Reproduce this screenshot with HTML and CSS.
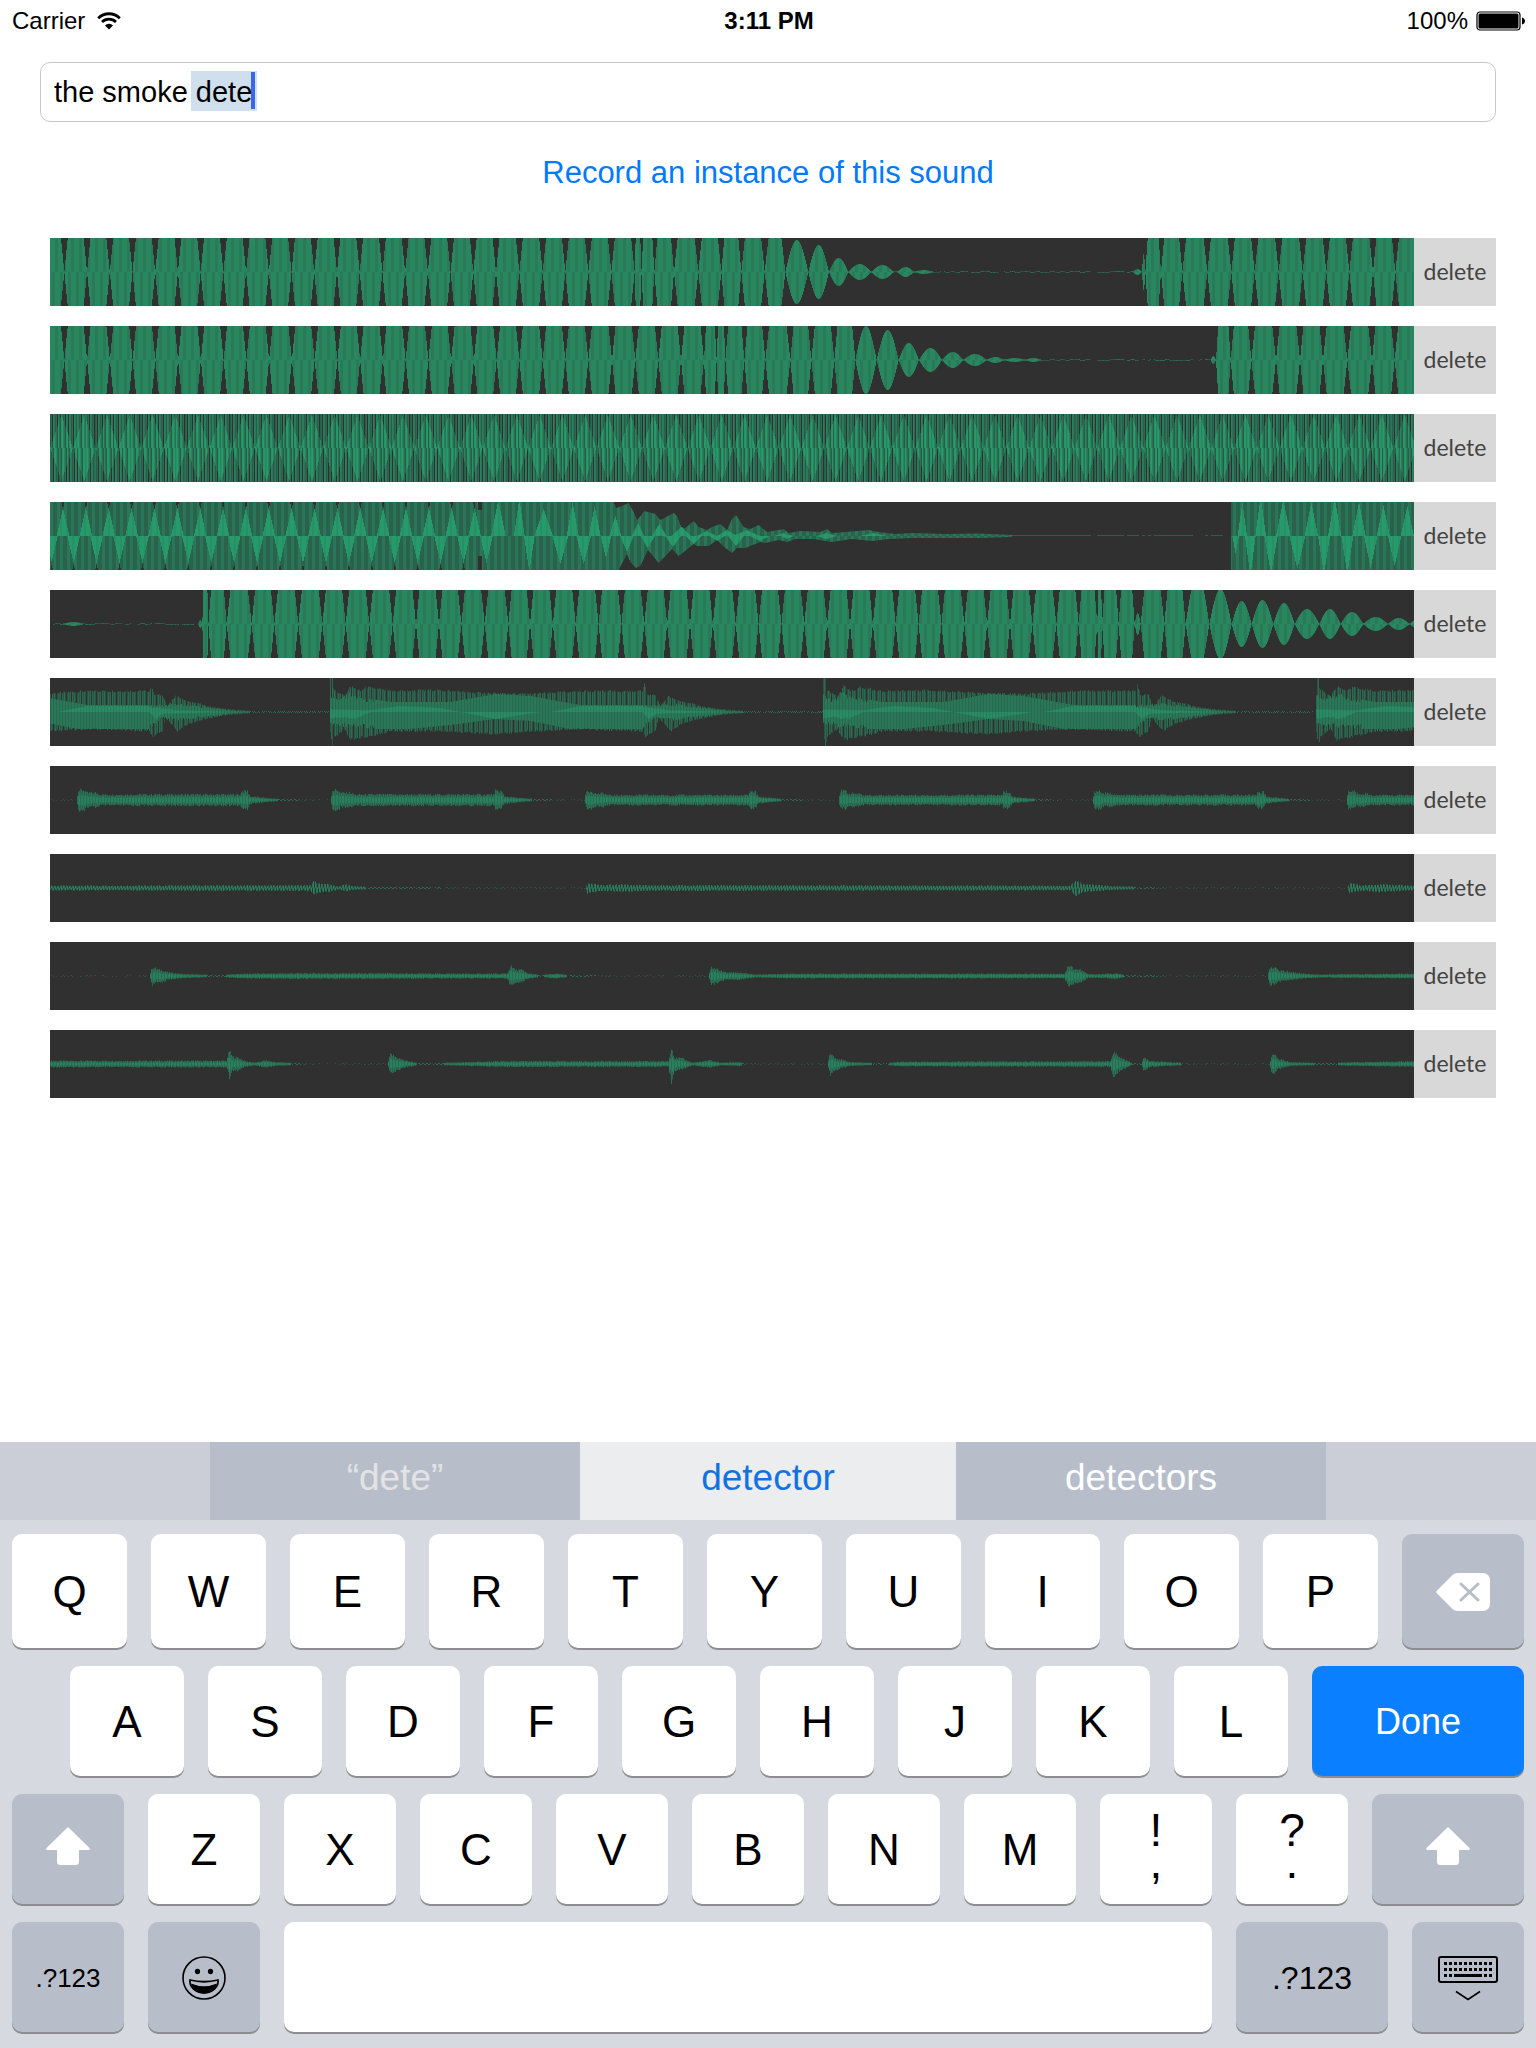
FILE: index.html
```html
<!DOCTYPE html>
<html lang="en">
<head>
<meta charset="utf-8">
<meta name="viewport" content="width=device-width, initial-scale=1">
<title>Sound recorder</title>
<link rel="stylesheet" href="styles.css">
</head>
<body>
<div class="screen">
  <header class="status">
    <div class="status-left">
      <span>Carrier</span>
      <svg class="wifi" width="24" height="18" viewBox="0 0 24 18" aria-hidden="true">
        <path d="M1.2 6.2a15.3 15.3 0 0 1 21.6 0" fill="none" stroke="#000" stroke-width="2.8"/>
        <path d="M5 10a9.9 9.9 0 0 1 14 0" fill="none" stroke="#000" stroke-width="2.6"/>
        <path d="M12 17.6l-4-4.1a5.7 5.7 0 0 1 8 0z"/>
      </svg>
    </div>
    <time class="clock">3:11 PM</time>
    <div class="status-right">
      <span>100%</span>
      <svg class="battery" width="50" height="20" viewBox="0 0 50 20" aria-hidden="true">
        <rect x="1" y="1" width="43" height="18" rx="3" fill="none" stroke="#000" stroke-width="1.2"/>
        <rect x="2.500" y="2.500" width="40" height="15" rx="1.500"/>
        <path d="M46 6.5c4 1 4 6 0 7z"/>
      </svg>
    </div>
  </header>

  <main class="content">
    <div class="field">
      <input class="field-input" type="text" aria-label="Sound name" value="the smoke dete">
      <span class="marked"></span>
      <span class="caret"></span>
    </div>
    <button class="record" type="button">Record an instance of this sound</button>
    <ul class="clips">
      <li class="clip"><canvas class="wave" width="1364" height="68"></canvas><button class="delete" type="button">delete</button></li>
      <li class="clip"><canvas class="wave" width="1364" height="68"></canvas><button class="delete" type="button">delete</button></li>
      <li class="clip"><canvas class="wave" width="1364" height="68"></canvas><button class="delete" type="button">delete</button></li>
      <li class="clip"><canvas class="wave" width="1364" height="68"></canvas><button class="delete" type="button">delete</button></li>
      <li class="clip"><canvas class="wave" width="1364" height="68"></canvas><button class="delete" type="button">delete</button></li>
      <li class="clip"><canvas class="wave" width="1364" height="68"></canvas><button class="delete" type="button">delete</button></li>
      <li class="clip"><canvas class="wave" width="1364" height="68"></canvas><button class="delete" type="button">delete</button></li>
      <li class="clip"><canvas class="wave" width="1364" height="68"></canvas><button class="delete" type="button">delete</button></li>
      <li class="clip"><canvas class="wave" width="1364" height="68"></canvas><button class="delete" type="button">delete</button></li>
      <li class="clip"><canvas class="wave" width="1364" height="68"></canvas><button class="delete" type="button">delete</button></li>
    </ul>
  </main>

  <section class="keyboard" aria-label="Keyboard">
    <div class="suggestions">
      <button class="suggestion typed" type="button">“dete”</button>
      <button class="suggestion chosen" type="button">detector</button>
      <button class="suggestion" type="button">detectors</button>
    </div>
    <div class="keys">
      <div class="row row-1">
        <button class="key" type="button">Q</button><button class="key" type="button">W</button><button class="key" type="button">E</button><button class="key" type="button">R</button><button class="key" type="button">T</button><button class="key" type="button">Y</button><button class="key" type="button">U</button><button class="key" type="button">I</button><button class="key" type="button">O</button><button class="key" type="button">P</button>
        <button class="key dark" type="button" aria-label="Backspace">
          <svg width="54" height="38" viewBox="0 0 54 38" aria-hidden="true">
            <path d="M1 17.5L16.500 2Q18.500 0 21.500 0H46Q54 0 54 8V30Q54 38 46 38H21.500Q18.500 38 16.500 36L1 20.500Q-.5 19 1 17.500z" fill="#fff"/>
            <path d="M25 11l17 16M42 11L25 27" stroke="#b7bec9" stroke-width="3" stroke-linecap="round"/>
          </svg>
        </button>
      </div>
      <div class="row row-2">
        <button class="key" type="button">A</button><button class="key" type="button">S</button><button class="key" type="button">D</button><button class="key" type="button">F</button><button class="key" type="button">G</button><button class="key" type="button">H</button><button class="key" type="button">J</button><button class="key" type="button">K</button><button class="key" type="button">L</button>
        <button class="key done" type="button">Done</button>
      </div>
      <div class="row row-3">
        <button class="key dark" type="button" aria-label="Shift">
          <svg class="arrow" width="44" height="38" viewBox="0 0 44 38" aria-hidden="true"><path d="M22 0L43.500 21Q45 23 42 23H33V34.500Q33 38 29.500 38H14.500Q11 38 11 34.500V23H2Q-1 23 .5 21z" fill="#fff"/></svg>
        </button>
        <button class="key" type="button">Z</button><button class="key" type="button">X</button><button class="key" type="button">C</button><button class="key" type="button">V</button><button class="key" type="button">B</button><button class="key" type="button">N</button><button class="key" type="button">M</button>
        <button class="key double" type="button"><span>!</span><span>,</span></button>
        <button class="key double" type="button"><span>?</span><span>.</span></button>
        <button class="key dark" type="button" aria-label="Shift">
          <svg class="arrow" width="44" height="38" viewBox="0 0 44 38" aria-hidden="true"><path d="M22 0L43.500 21Q45 23 42 23H33V34.500Q33 38 29.500 38H14.500Q11 38 11 34.500V23H2Q-1 23 .5 21z" fill="#fff"/></svg>
        </button>
      </div>
      <div class="row row-4">
        <button class="key dark small" type="button">.?123</button>
        <button class="key dark" type="button" aria-label="Emoji">
          <svg width="44" height="44" viewBox="0 0 44 44" aria-hidden="true">
            <circle cx="22" cy="22" r="21" fill="none" stroke="#000" stroke-width="1.600"/>
            <ellipse cx="15.500" cy="15.500" rx="2.600" ry="2.800"/><ellipse cx="28.500" cy="15.500" rx="2.600" ry="2.800"/>
            <path d="M8 24Q22 27.500 36 24C37 31 30 37 22 37S7 31 8 24z" fill="none" stroke="#000" stroke-width="1.800" stroke-linejoin="round"/>
            <path d="M9 27.500Q22 33 35 27.500C34 33 29 37 22 37S10 33 9 27.500z"/>
          </svg>
        </button>
        <button class="key" type="button" aria-label="Space"></button>
        <button class="key dark medium" type="button">.?123</button>
        <button class="key dark" type="button" aria-label="Hide keyboard">
          <svg width="60" height="46" viewBox="0 0 60 46" aria-hidden="true">
            <rect x="1" y="2" width="58" height="25" rx="2" fill="none" stroke="#000" stroke-width="2"/>
            <path d="M6 8.500H54M6 14.500H54" stroke="#000" stroke-width="3" stroke-dasharray="3 2"/>
            <path d="M6 20.500H14M46 20.500H54" stroke="#000" stroke-width="3" stroke-dasharray="3 2"/>
            <path d="M16 20.500H44" stroke="#000" stroke-width="3"/>
            <path d="M18 36.500L30 44.500L42 36.500" fill="none" stroke="#000" stroke-width="1.600"/>
          </svg>
        </button>
      </div>
    </div>
  </section>
</div>
<script src="waveforms.js"></script>
</body>
</html>
```
FILE: styles.css
```css
* {
  box-sizing: border-box;
}

body {
  margin: 0;
  background: #fff;
  color: #000;
  font-family: "Liberation Sans", Arial, sans-serif;
}

button {
  margin: 0;
  padding: 0;
  border: 0;
  font: inherit;
  color: inherit;
  background: none;
}

.screen {
  display: flex;
  flex-direction: column;
  min-height: 100vh;
}

.status {
  display: grid;
  grid-template-columns: 1fr auto 1fr;
  align-items: center;
  height: 42px;
  padding: 0 10px 0 12px;
  font-size: 24px;
  line-height: 28px;
}

.status-left,
.status-right {
  display: flex;
  align-items: center;
  gap: 12px;
}

.status-right {
  justify-content: flex-end;
  gap: 8px;
}

.clock {
  font-weight: bold;
}

.content {
  display: flex;
  flex-direction: column;
  flex: 1;
  padding: 20px 40px 0;
}

.field {
  position: relative;
}

.field-input {
  display: block;
  width: 100%;
  height: 60px;
  padding: 0 13px;
  border: 1px solid #c9c9c9;
  border-radius: 10px;
  outline: 0;
  background: #fff;
  font: 29px/34px "Liberation Sans", Arial, sans-serif;
  color: #000;
}

.marked {
  position: absolute;
  left: 151px;
  top: 9px;
  width: 66px;
  height: 40px;
  background: #cfdfee;
  mix-blend-mode: multiply;
}

.caret {
  position: absolute;
  left: 211px;
  top: 10px;
  width: 4px;
  height: 37px;
  background: #3a66e8;
}

.record {
  align-self: center;
  margin-top: 31px;
  font-size: 31px;
  line-height: 40px;
  color: #007aff;
}

.clips {
  display: flex;
  flex-direction: column;
  gap: 20px;
  margin: 45px 0 20px;
  padding: 0 0 0 10px;
  list-style: none;
}

.clip {
  display: flex;
  height: 68px;
}

.wave {
  flex: 1;
  min-width: 0;
  height: 68px;
  background: #303030;
}

.delete {
  flex: 0 0 82px;
  padding-bottom: 2px;
  background: #d8d8d8;
  color: #444;
  font: 400 23px/28px Lato, sans-serif;
}

.keyboard {
  background: #d6d9e0;
}

.suggestions {
  display: grid;
  grid-template-columns: 370fr 376fr 370fr;
  height: 78px;
  padding: 0 210px;
  background: #cbced6;
  font-size: 37px;
  line-height: 42px;
}

.suggestion {
  padding-bottom: 6px;
  background: #b7bec9;
  color: #fff;
}

.suggestion.typed {
  color: #e3e3e5;
}

.suggestion.chosen {
  background: #ebedef;
  color: #1272e0;
}

.keys {
  display: flex;
  flex-direction: column;
  gap: 18px;
  padding: 14px 12px 16px;
}

.row {
  display: grid;
  gap: 24px;
  height: 110px;
}

.row-1 {
  grid-template-columns: repeat(10, 115fr) 122fr;
  height: 114px;
}

.row-2 {
  grid-template-columns: repeat(9, 114fr) 212fr;
  padding-left: 58px;
}

.row-3 {
  grid-template-columns: repeat(10, 112fr) 152fr;
}

.row-4 {
  grid-template-columns: 112fr 112fr 928fr 152fr 112fr;
}

.key {
  display: flex;
  align-items: center;
  justify-content: center;
  min-width: 0;
  padding-top: 2px;
  border-radius: 10px;
  background: #fff;
  box-shadow: 0 2px 0 #8b8d91;
  font-size: 44px;
  line-height: 48px;
}

.key.dark {
  background: #b7bec9;
}

.key.done {
  background: #0a7fff;
  color: #fff;
  font-size: 36px;
}

.key.small {
  font-size: 26px;
}

.key.medium {
  font-size: 32px;
}

.key.double {
  flex-direction: column;
  justify-content: flex-start;
  padding-top: 12px;
  font-size: 46px;
  line-height: 48px;
}

.key.double span + span {
  margin-top: -16px;
}

.arrow {
  margin-bottom: 8px;
}
```
FILE: waveforms.js
```js
const MID = 34;
const LEFT = 50;

// Piecewise-linear lookup in a list of [x, value] points.
function at(points, x) {
  if (x <= points[0][0]) return points[0][1];
  for (let i = 1; i < points.length; i++) {
    const [x1, y1] = points[i];
    if (x <= x1) {
      const [x0, y0] = points[i - 1];
      return y0 + (y1 - y0) * (x - x0) / (x1 - x0);
    }
  }
  return points[points.length - 1][1];
}

function column(ctx, x, up, down, color) {
  up = Math.min(MID, up);
  down = Math.min(MID, down);
  if (up + down <= 0) return;
  ctx.fillStyle = color;
  ctx.fillRect(x, MID - up, 1, up + down);
}

function noise(x) {
  const v = Math.sin(x * 12.9898) * 43758.5453;
  return v - Math.floor(v);
}

// Chain of lobes; each entry is [end, peak], three units to a pixel.
function lobes(ctx, start, list) {
  for (let x = 0; x < 1364; x++) {
    const u = (x + LEFT + 0.5) * 3;
    let from = start;
    for (const [end, peak] of list) {
      if (u < end) {
        if (peak <= 1) {
          if (noise(Math.floor(x / 3)) > 0.25 - peak * 0.2) {
            ctx.fillStyle = noise(x) > 0.5 ? "#2a6a50" : "#2c5343";
            ctx.fillRect(x, noise(Math.floor(x / 5)) > 0.5 ? 33 : 34, 1, 1);
          }
        } else {
          const h = Math.max(0.7, peak * Math.sin(Math.PI * (u - from) / (end - from)));
          const bright = "#28875f", deep = "#2a7a59";
          column(ctx, x, h, 0, x % 8 < 5 ? bright : deep);
          column(ctx, x, 0, h, (x + 3) % 8 < 5 ? bright : deep);
        }
        break;
      }
      from = end;
    }
  }
}

function full(...ends) {
  return ends.map((e) => [e, 74]);
}

function steady(first, last, steps) {
  const out = [];
  for (let i = 0; i <= steps; i++) out.push([first + (last - first) * i / steps, 74]);
  return out;
}

function beats(ctx) {
  const shades = ["#2a5c48", "#303030", "#28775a", "#2b6a52", "#28805d"];
  const inner = ["#28845f", "#2a5c48", "#27996b", "#2a7055", "#279366"];
  for (let x = 0; x < 1364; x++) {
    const u = (x + LEFT) * 3;
    const phase = ((u - 183) / 68.3 + 100) % 1;
    const h = 33 * Math.abs(2 * phase - 1);
    const i = (x * 3 + Math.floor(x / 9)) % 5;
    const j = (i + 2) % 5;
    column(ctx, x, MID, 0, shades[i]);
    column(ctx, x, 0, MID, shades[j]);
    column(ctx, x, h, 0, inner[i]);
    column(ctx, x, 0, h, inner[j]);
  }
}

function triangles(ctx) {
  const up = [[1841, 34], [1848, 28], [1866, 30], [1886, 33], [1901, 24], [1912, 16], [1933, 25], [1966, 22], [1981, 16], [2021, 23], [2031, 20], [2044, 9], [2056, 8], [2081, 15], [2096, 9], [2121, 6], [2136, 9], [2161, 12], [2181, 6], [2196, 17], [2208, 21], [2231, 9], [2251, 7], [2276, 11], [2301, 4], [2351, 7], [2366, 3], [2401, 5], [2461, 4], [2481, 7], [2496, 3], [2536, 4], [2606, 6], [2636, 4], [2686, 2], [2736, 3], [2836, 2], [2936, 2.5], [3036, 1], [3120, 0]];
  const down = [[1856, 34], [1881, 18], [1891, 26], [1908, 32], [1921, 30], [1944, 14], [1976, 27], [2016, 13], [2036, 20], [2048, 17], [2081, 8], [2091, 10], [2126, 10], [2151, 4], [2176, 12], [2196, 17], [2211, 12], [2236, 12], [2281, 6], [2296, 7], [2336, 4], [2361, 6], [2386, 3], [2441, 3], [2496, 6], [2556, 3], [2616, 5], [2666, 3], [2736, 2], [2936, 2], [3036, 1], [3120, 0]];
  const tops = [], bottoms = [[155, 18, 26]];
  for (let i = 0; i < 19; i++) {
    tops.push([189 + i * 68.6, 19, 28]);
    bottoms.push([221 + i * 68.8, 19, 27]);
  }
  tops.push([1495, 22, 36], [1558, 16, 38], [1631, 28, 27], [1718, 18, 34], [1784, 18, 30], [1846, 18, 20], [1914, 18, 13], [1978, 22, 12], [2044, 30, 9], [2120, 30, 5], [2181, 30, 6], [2240, 40, 6], [2350, 30, 3], [2480, 30, 3], [2620, 40, 3], [3727, 14, 34], [3782, 16, 40], [3850, 22, 36], [3934, 20, 34], [4004, 20, 38], [4077, 20, 34], [4150, 20, 31], [4222, 20, 30]);
  bottoms.push([1588, 16, 36], [1681, 24, 28], [1751, 22, 28], [1818, 16, 22], [1881, 20, 16], [1943, 22, 12], [2019, 24, 11], [2081, 24, 8], [2151, 24, 5], [2208, 24, 10], [2280, 30, 5], [2361, 20, 3], [2480, 30, 3], [3707, 10, 18], [3751, 16, 40], [3813, 20, 38], [3892, 24, 33], [3972, 18, 38], [4042, 18, 38], [4112, 20, 32], [4184, 20, 30]);
  const peak = (list, u) => Math.max(0, ...list.map(([c, w, h]) => h * (1 - Math.abs(u - c) / w)));
  for (let x = 0; x < 1364; x++) {
    const u = (x + LEFT + 0.5) * 3;
    if (u > 3036 && u < 3694) {
      if (noise(Math.floor(x / 3)) > 0.3) {
        ctx.fillStyle = "#2a5f4a";
        ctx.fillRect(x, 33, 1, 1);
      }
      continue;
    }
    const on = u >= 3694;
    let a = on ? 34 : at(up, u), b = on ? 34 : at(down, u);
    const t = peak(tops, u), d = peak(bottoms, u);
    if (u < 1425 && t > 22) a = 55 - t;
    if (u < 1425 && d > 22) b = 55 - d;
    if (u > 1434 && u < 1446) { b = 20; a = 26; }
    column(ctx, x, a, 0, x % 7 < 3 ? "#29765a" : "#2b624b");
    column(ctx, x, 0, b, (x + 4) % 7 < 3 ? "#29765a" : "#2b624b");
    column(ctx, x, Math.min(a, t), Math.min(b, d), x % 6 < 4 ? "#279a6c" : "#289066");
  }
}

function beeps(ctx) {
  const up = [[0, 34], [2, 34], [3, 24], [10, 19], [14, 17], [20, 27], [30, 22], [36, 26], [60, 22], [105, 23], [150, 20], [200, 19], [250, 22], [312, 22], [314, 29], [317, 18], [325, 18], [330, 6], [338, 17], [350, 11], [362, 9], [370, 6], [390, 3], [415, 1], [425, 0]];
  const down = [[0, 20], [2, 34], [4, 26], [14, 18], [20, 29], [45, 24], [60, 20], [105, 20], [165, 23], [200, 20], [250, 18], [312, 20], [315, 26], [325, 20], [328, 6], [340, 20], [350, 13], [365, 8], [390, 3], [415, 1], [425, 0]];
  const midUp = [[0, 20], [8, 14], [20, 20], [35, 14], [60, 10], [120, 10], [165, 18], [200, 16], [250, 7], [312, 7], [340, 9], [400, 1]];
  const midDown = [[0, 14], [40, 17], [80, 17], [120, 13], [165, 7], [200, 9], [240, 17], [312, 17], [326, 6], [340, 9], [400, 1]];
  const coreUp = [[0, 3], [40, 2], [70, 6], [110, 4], [130, 0], [220, 0], [250, 6], [312, 6], [340, 2], [400, 0]];
  const coreDown = [[0, 8], [10, 6], [25, 8], [40, 0], [130, 0], [165, 7], [210, 0], [312, 0], [318, 8], [326, 2], [400, 0]];
  for (let x = 0; x < 1364; x++) {
    const t = (x + LEFT - 330 + 493) % 493;
    if (t > 412) {
      if (noise(x) > 0.3) {
        ctx.fillStyle = "#2a6a50";
        ctx.fillRect(x, 33 + x % 2, 1, 1);
      }
      continue;
    }
    const rough = t < 45 || t > 312;
    const k = rough ? 0.7 + 0.3 * noise(x) : 1, m = rough ? 0.7 + 0.3 * noise(x + 3) : 1;
    const a = t < 4 ? at(up, t) : at(up, t) * (0.9 + 0.1 * noise(x));
    const b = t < 4 ? at(down, t) : at(down, t) * (0.9 + 0.1 * noise(x + 5));
    if (x % 5 !== 1) column(ctx, x, a, 0, x % 2 ? "#2c5243" : "#2a6a50");
    if (x % 5 !== 3) column(ctx, x, 0, b, x % 2 ? "#2a6a50" : "#2c5243");
    column(ctx, x, Math.min(a, at(midUp, t) * k), Math.min(b, at(midDown, t) * m), x % 3 ? "#297858" : "#2a664e");
    column(ctx, x, Math.min(a, at(coreUp, t) * k), Math.min(b, at(coreDown, t) * m), x % 3 ? "#288d64" : "#297b5a");
  }
}

// Quiet recording: one envelope, jittered per column.
function quiet(ctx, points, comb) {
  for (let x = 0; x < 1364; x++) {
    const h = at(points, x + LEFT);
    if (h < 1.4) {
      if (noise(x) > 0.55 - h * 0.25) {
        ctx.fillStyle = h < 0.8 ? "#2b5041" : "#2a6a50";
        ctx.fillRect(x, 33 + Math.floor(x / 2) % 2, 1, 1);
      }
      continue;
    }
    const a = h * (0.7 + 0.35 * noise(x)), b = h * (0.7 + 0.35 * noise(x + 7));
    if (comb) {
      column(ctx, x, x % 3 ? a : 0.5, x % 3 === 1 ? 0.5 : b, x % 2 ? "#29805e" : "#2a6b51");
    } else {
      column(ctx, x, a, b, x % 2 ? "#2a7054" : "#2b604a");
      column(ctx, x, a * 0.5, b * 0.5, x % 3 ? "#29805e" : "#2a6b51");
    }
  }
}

function repeating() {
  const shape = [[-2, 0], [0, 11], [6, 11], [8, 8], [18, 8], [22, 6], [162, 6], [163, 10], [169, 10], [172, 4], [190, 2], [195, 1.5], [215, 1], [235, 0]];
  const out = [[50, 0]];
  for (let i = 0; i < 6; i++) for (const [x, h] of shape) out.push([78 + i * 254 + x, i > 1 ? h * 0.9 : h]);
  return out;
}

const painters = [
  (c) => lobes(c, 125, [...steady(193, 1488, 19), ...full(1558, 1628, 1696, 1765, 1834, 1904, 1924, 1963, 2022, 2095, 2164, 2224, 2294), [2356, 60], [2425, 32], [2487, 27], [2545, 14], [2614, 8], [2681, 7], [2692, 1], [2742, 5], [2800, 2], [2880, 1], [3399, 0], [3426, 3], [3436, 18], ...full(3483, 3547, 3622, 3694, 3764, 3836, 3908, 3979, 4048, 4119, 4186, 4258)]),
  (c) => lobes(c, 125, [...steady(193, 1490, 19), ...full(1558, 1628, 1696, 1765, 1836, 1906, 1975, 2043, 2112, 2150, 2176, 2233, 2296, 2371, 2434, 2503, 2566), [2630, 34], [2696, 30], [2757, 17], [2826, 12], [2890, 8], [2960, 6], [3012, 3], [3076, 2], [3124, 2], [3150, 0], [3192, 1], [3632, 0], [3648, 4], ...full(3692, 3754, 3828, 3900, 3969, 4042, 4116, 4184, 4254)]),
  beats,
  triangles,
  (c) => lobes(c, 130, [[190, 1], [250, 2], [300, 1], [595, 0], [607, 4], ...full(625, 680, 755, 823, 895, 967, 1037, 1108, 1178, 1248, 1317, 1384, 1454, 1525), ...steady(1590, 3030, 21), ...full(3097, 3169, 3236, 3292, 3306, 3356, 3404), [3422, 11], ...full(3493, 3557), [3628, 50], [3695, 35], [3755, 23], [3820, 24], [3884, 21], [3958, 15], [4022, 15], [4090, 12], [4164, 7], [4229, 6], [4290, 6]]),
  beeps,
  (c) => quiet(c, repeating(), false),
  (c) => quiet(c, [[50, 2.500], [310, 3], [314, 8], [318, 5], [330, 4], [338, 1.500], [345, 4], [352, 2], [370, 1.200], [440, 1], [470, 0], [585, 0], [587, 6], [600, 3], [622, 4], [640, 3], [1070, 2.500], [1076, 9], [1082, 4], [1092, 4], [1110, 2], [1150, 1], [1170, 0], [1347, 0], [1349, 6], [1360, 3], [1380, 4], [1414, 2.500]], true),
  (c) => quiet(c, [[50, 0], [149, 0], [152, 10], [158, 7], [163, 6], [168, 4], [185, 2], [220, 1], [240, 2.500], [300, 3], [500, 2.500], [507, 3], [510, 11], [515, 7], [521, 7], [527, 3], [540, 1], [555, 2.500], [570, 1], [595, 1], [600, 0], [708, 0], [711, 10], [718, 7], [725, 4], [737, 4], [755, 1.500], [790, 2.500], [1064, 2.500], [1068, 12], [1074, 8], [1080, 7], [1088, 2], [1100, 2], [1115, 3], [1125, 1], [1155, 1], [1160, 0], [1267, 0], [1270, 11], [1280, 6], [1300, 3], [1320, 1.500], [1340, 2], [1414, 2.500]], false),
  (c) => quiet(c, [[50, 3.500], [226, 3.500], [229, 15], [232, 8], [238, 7], [245, 3], [255, 1.500], [265, 4], [275, 2], [300, 1], [305, 0], [387, 0], [390, 11], [397, 7], [404, 4], [418, 1], [450, 1.500], [500, 3], [668, 3], [671, 20], [674, 7], [682, 6], [692, 1.500], [710, 4], [720, 1.500], [740, 2], [745, 0], [827, 0], [830, 14], [834, 7], [840, 5], [850, 2], [885, 1], [900, 2.500], [1110, 3], [1113, 15], [1118, 8], [1126, 4], [1132, 1], [1141, 1], [1143, 7], [1150, 3], [1180, 1.500], [1185, 0], [1269, 0], [1272, 13], [1277, 6], [1290, 2], [1330, 1], [1350, 2], [1414, 3]], false)
];

document.querySelectorAll(".wave").forEach((canvas, i) => painters[i](canvas.getContext("2d")));
```
